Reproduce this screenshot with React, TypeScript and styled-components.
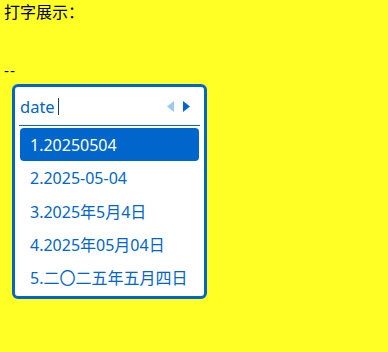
import React, { FC } from 'react'
import styled, { createGlobalStyle } from 'styled-components'

const GlobalStyle = createGlobalStyle`
  html, body {
    margin: 0;
    padding: 0;
    background: #ffff26;
  }
  body {
    padding: 0 4px;
    min-height: 352px;
    box-sizing: border-box;
    font-family: "Noto Sans CJK SC", sans-serif;
  }
`

const Title = styled.div`
  font-size: 16px;
  line-height: 22px;
  color: #000;
`

const Dashes = styled.div`
  margin-top: 38px;
  font-family: "Liberation Sans", sans-serif;
  font-size: 15px;
  line-height: 22px;
  letter-spacing: 1px;
  color: #000;
`

const Panel = styled.div`
  margin: 2px 0 0 8px;
  width: 195px;
  box-sizing: border-box;
  border: 3px solid #0066cc;
  border-radius: 6px;
  background: #fff;
  padding: 0 5px 3px;
  font-family: "Noto Sans", "Noto Sans CJK SC", sans-serif;
`

const InputRow = styled.div`
  display: flex;
  align-items: center;
  height: 38px;
  border-bottom: 1px solid #0066cc;
  margin: 0 -1px;
`

const Typed = styled.span`
  font-size: 16.5px;
  color: #0066cc;
  padding-left: 1px;
`

const Caret = styled.span`
  width: 1px;
  height: 17px;
  margin-left: 3px;
  background: #1a3e78;
`

const Pager = styled.div`
  margin-left: auto;
  display: flex;
  gap: 9px;
  padding-right: 10px;
`

const Candidates = styled.div`
  display: flex;
  flex-direction: column;
  padding-top: 2px;
`

const Candidate = styled.div<{ $active?: boolean }>`
  height: 33px;
  display: flex;
  align-items: center;
  padding-left: 10px;
  border-radius: 4px;
  font-size: 16px;
  color: ${(p) => (p.$active ? '#fff' : '#0066cc')};
  background: ${(p) => (p.$active ? '#0066cc' : 'transparent')};
`

const Arrow: FC<{ dir: 'left' | 'right'; color: string }> = ({ dir, color }) => (
  <svg width="7" height="11" viewBox="0 0 7 11">
    <path d={dir === 'left' ? 'M7 0 L0 5.5 L7 11 Z' : 'M0 0 L7 5.5 L0 11 Z'} fill={color} />
  </svg>
)

const items = [
  '1.20250504',
  '2.2025-05-04',
  '3.2025年5月4日',
  '4.2025年05月04日',
  '5.二〇二五年五月四日',
]

export default function App() {
  return (
    <>
      <GlobalStyle />
      <Title>打字展示：</Title>
      <Dashes>--</Dashes>
      <Panel>
        <InputRow>
          <Typed>date</Typed>
          <Caret />
          <Pager>
            <Arrow dir="left" color="#9cc8f2" />
            <Arrow dir="right" color="#0066cc" />
          </Pager>
        </InputRow>
        <Candidates>
          {items.map((t, i) => (
            <Candidate key={t} $active={i === 0}>
              {t}
            </Candidate>
          ))}
        </Candidates>
      </Panel>
    </>
  )
}
